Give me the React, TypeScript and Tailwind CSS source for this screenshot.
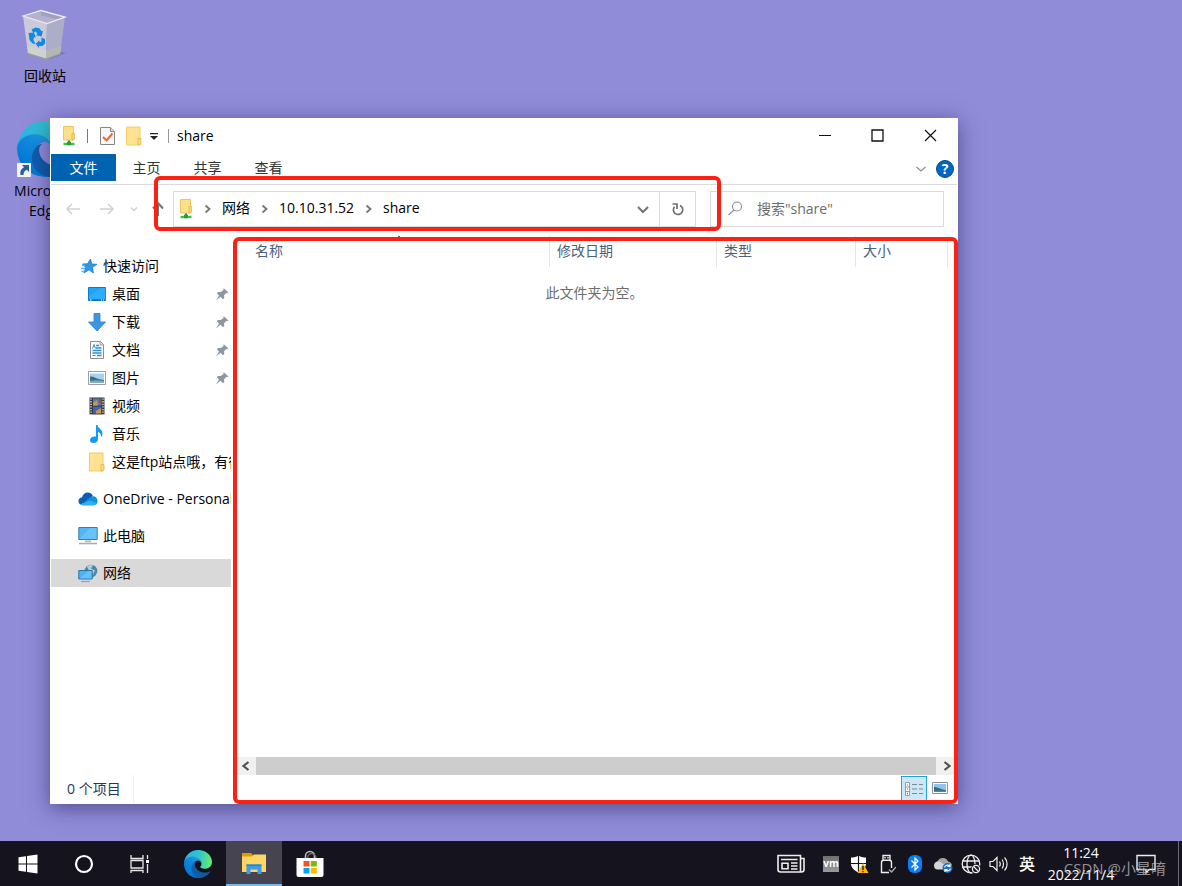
import React from 'react';

type IconProps = { className?: string };

const EdgeLogo: React.FC<IconProps> = ({ className }) => (
    <svg viewBox="0 0 256 256" className={className}>
        <defs>
            <linearGradient id="edge-deep" x1="63" y1="177" x2="241" y2="177" gradientUnits="userSpaceOnUse">
                <stop offset="0" stopColor="#0f5fae" />
                <stop offset="1" stopColor="#15539b" />
            </linearGradient>
            <linearGradient id="edge-mid" x1="153" y1="95" x2="46" y2="215" gradientUnits="userSpaceOnUse">
                <stop offset="0" stopColor="#1b9de2" />
                <stop offset="0.4" stopColor="#1388dc" />
                <stop offset="1" stopColor="#0078d4" />
            </linearGradient>
            <linearGradient id="edge-top" x1="10" y1="70" x2="250" y2="100" gradientUnits="userSpaceOnUse">
                <stop offset="0" stopColor="#2fb0e8" />
                <stop offset="0.5" stopColor="#30c4cb" />
                <stop offset="1" stopColor="#66eb6e" />
            </linearGradient>
        </defs>
        <path fill="url(#edge-deep)" d="M235.7 195.5a94 94 0 0 1-10.5 4.7 102 102 0 0 1-35.9 6.5c-47.3 0-88.5-32.6-88.5-74.4a31.5 31.5 0 0 1 16.4-27.5c-42.8 1.8-53.8 46.4-53.8 72.5 0 73.9 68.1 79 82.8 79 7.9 0 19.8-2.3 27-4.6l1.3-.4a128 128 0 0 0 66.6-50.4 4 4 0 0 0-5.4-5.4z" />
        <path fill="url(#edge-mid)" d="M105.7 241.4A79 79 0 0 1 83 220a81 81 0 0 1 29.5-120.4c3.1-1.5 8.5-4.1 15.5-4a32 32 0 0 1 25.7 13 32 32 0 0 1 6.4 18.6c0-.2 24.5-79.6-80-79.6-43.9 0-80 41.7-80 78.2a130 130 0 0 0 12.1 56 128 128 0 0 0 156.4 67.1 75.6 75.6 0 0 1-62.9-7.5z" />
        <path fill="url(#edge-top)" d="M152.3 148.9c-.8 1-3.3 2.5-3.3 5.6 0 2.6 1.7 5.1 4.7 7.2 14.4 10 41.5 8.7 41.6 8.7a59.6 59.6 0 0 0 30.3-8.3 61.4 61.4 0 0 0 30.4-52.9c.3-22.4-8-37.3-11.3-43.9C223.5 23.8 177.7 0 128 0A128 128 0 0 0 0 126.2c.5-36.5 36.8-66 80-66 3.500 0 23.500.3 42 10 16.300 8.600 24.900 19 30.900 29.200 6.200 10.700 7.300 24.200 7.300 29.500s-2.800 13.400-7.900 20z" />
    </svg>
);

const RecycleBin = () => (
    <svg viewBox="0 0 48 56" className="h-14 w-12">
        <path d="M22 51l18-5 5 1-16 6z" fill="#6a66a6" opacity="0.6" />
        <path d="M2 10L20 4.500l24 6.500-18 6.500z" fill="#b3b1cd" />
        <path d="M20 4.500l24 6.500-6 2.500-18-4z" fill="#a09fc0" />
        <path d="M2 10l24 7.500L25 53 7 47.500z" fill="#cbcadb" />
        <path d="M44 11l-18 6.500L25 53l14-5z" fill="#acadc6" />
        <path d="M6.500 40l19 4.500L25 53 7 47.500z" fill="#d0d2d0" />
        <path d="M25.500 44.500l15-4.500-1.500 8-14 5z" fill="#b4b6b6" />
        <path d="M2 10L20 4.500l24 6.500-18 6.500z" fill="none" stroke="#ecebf5" strokeWidth="1.300" />
        <path d="M7 47.500L25 53l14-5" fill="none" stroke="#9c9b90" strokeWidth="1.200" />
        <g fill="#128ae0">
            <path d="M10.500 23.500l4-2 4 .8 2 3 1.500-.3-1.500 5.500-5.500-1.300 1.500-1.200-1.800-2.500-2.400 1.500z" />
            <path d="M7.500 27l5.500-.5 1.800 5-1.800-.3-.6 2.800 2.100 4-3-.5-3-3.500-.5-4z" />
            <path d="M20.500 31.500l3.500 1.500v4.500l-2.500 2.500h-3.500l-.2 2-3-4.200 3.600-3.600.1 1.800 1.900-.2z" />
        </g>
    </svg>
);

const NetworkFolder = () => (
    <svg viewBox="0 0 14 20" className="h-5 w-3.5">
        <path d="M1.500.5h10V14h-10z" fill="#ffe08a" stroke="#ecc65b" />
        <path d="M10 7.500h2.500V13l-1 1H10z" fill="#f8d673" stroke="#dcb245" strokeWidth=".7" />
        <path d="M7 14.500v3" stroke="#21903a" strokeWidth="2.200" />
        <path d="M1.500 18h11" stroke="#35c24a" strokeWidth="2.400" />
        <path d="M5 17.500h4" stroke="#22a03a" strokeWidth="3.400" />
    </svg>
);

const Folder = () => (
    <svg viewBox="0 0 20 20" className="h-5 w-5">
        <path d="M2.500 1h13.500v18h-13.500z" fill="#ffe392" stroke="#f0cc66" />
        <path d="M14 12.500h3V18l-1 1H14z" fill="#ffdb7a" stroke="#e2b748" strokeWidth=".8" />
    </svg>
);

const CheckedPage = () => (
    <svg viewBox="0 0 20 20" className="h-5 w-5">
        <path d="M2.500 1.500h10l4 4V18.500h-14z" fill="#f7f7f7" stroke="#858585" />
        <path d="M12.500 1.500v4h4" fill="#ddd" stroke="#858585" />
        <path d="M5 11l3.500 3.500 6-7" fill="none" stroke="#ee6a35" strokeWidth="2" />
    </svg>
);

const QuickStar = () => (
    <svg viewBox="0 0 20 20" className="h-5 w-5">
        <path d="M12.500 3l1.200 5 5.300.3-4.500 3 .8 5.700-4.300-3.200-5 3.200 1.700-5.500L4.500 8l5-.2z" fill="#2d97e8" stroke="#1c7cc9" strokeWidth=".8" />
        <path d="M4 9.500h3M3 12.500h4M3.500 15.500h3" stroke="#5db5ee" strokeWidth="1.400" />
    </svg>
);

const DesktopIcon = () => (
    <svg viewBox="0 0 20 20" className="h-5 w-5">
        <path d="M1.500 3.500h17v13h-17z" fill="#1fa4fb" stroke="#0e7acb" />
        <path d="M2 12L14 4h4.500v12H2z" fill="#3fb3ff" opacity=".5" />
        <path d="M2 16h16" stroke="#0a5ea6" />
        <path d="M3 16h1.500M14 16h1M16 16h1" stroke="#fff" />
    </svg>
);

const DownloadIcon = () => (
    <svg viewBox="0 0 20 20" className="h-5 w-5">
        <path d="M7 1.500h6v8.500h5.500L10 19 1.500 10H7z" fill="#3b97e4" stroke="#2b7fca" strokeWidth=".8" />
    </svg>
);

const DocumentIcon = () => (
    <svg viewBox="0 0 20 20" className="h-5 w-5">
        <path d="M3.500 1.500h10l3 3v14h-13z" fill="#fafafa" stroke="#8b8f93" />
        <path d="M13 1.500v3.500h3.500" fill="#ddd" stroke="#8b8f93" strokeWidth=".8" />
        <path d="M9 5.500h3M9 8h5.500M5.500 10.500h9M5.500 13h9M10 15.500h4.500" stroke="#2f8fd6" strokeWidth="1.300" />
        <path d="M5.500 8.500l1.500-4 1.500 4M5.500 15.500h3" stroke="#3c8fc0" fill="none" />
    </svg>
);

const PictureIcon = () => (
    <svg viewBox="0 0 20 20" className="h-5 w-5">
        <path d="M1.500 3.500h17v13h-17z" fill="#fff" stroke="#9a9fa3" />
        <path d="M3 5.500h14v9H3z" fill="#a3d3f8" />
        <path d="M3 8.500c3-.5 5 1 7 2 2 .8 4 1 7 1.500v2.500H3z" fill="#3b6f77" />
        <path d="M3 13c5-1 9-.8 14 0v1.500H3z" fill="#7aabc8" />
    </svg>
);

const VideoIcon = () => (
    <svg viewBox="0 0 20 20" className="h-5 w-5">
        <path d="M2.500 1.500h15v17h-15z" fill="#35383c" />
        <path d="M6 2.500h8.500v7H6z" fill="#5876c9" />
        <path d="M6 10.500h8.500v7H6z" fill="#3f62b8" />
        <path d="M6 7l4-3 1 5.500H6zM9 15l5-3v5.500H9z" fill="#c59b3c" />
        <path d="M12 3h2v4h-2z" fill="#a24b44" />
        <path d="M4 2.500v16M16 2.500v16" stroke="#e8e8e8" strokeWidth="1.300" strokeDasharray="1.300 1.300" />
    </svg>
);

const MusicIcon = () => (
    <svg viewBox="0 0 20 20" className="h-5 w-5">
        <path d="M9 1h1.500c.5 3.500 5 4 5 8.500 0 2-1 3-1.500 4 .5-4-1.500-5-3-5.500V15c0 2.500-2 4-4.500 4S3 17.700 3 16s2-3.500 4.500-3.500c.6 0 1 0 1.500.3z" fill="#109bf5" />
    </svg>
);

const OneDriveIcon = () => (
    <svg viewBox="0 0 20 20" className="h-5 w-5">
        <path d="M.500 12c0-2 1.500-3.500 3.500-3.700C5 5.500 7 3.500 9.800 3.500c2.200 0 4 1.200 5 3.200L10 12l-7.500 3.500C1.200 15 .500 13.500.500 12z" fill="#0a5fb4" />
        <path d="M2.500 15.500c1-.1 2.500-1 3.500-1.900l6.200-5.400c3.500-2.200 7.300.3 7.300 3.900 0 2.300-1.500 4.100-3.500 4.100H4.500z" fill="#1490df" />
        <path d="M2.500 15.500l9.500-4 7 2.800c-.7 1.200-1.800 1.900-3 1.900H4.500z" fill="#2fb0f0" />
    </svg>
);

const ComputerIcon = () => (
    <svg viewBox="0 0 20 20" className="h-5 w-5">
        <path d="M.800 1.500h18.400v12H.800z" fill="#4fb7f7" stroke="#3b7ca8" />
        <path d="M1.500 13L12 2h6.500v11z" fill="#83d0ff" opacity=".5" />
        <path d="M7 14.500h6v1.500H7z" fill="#a8b9c6" />
        <path d="M1 17.500h18" stroke="#9db0bf" strokeWidth="1.600" />
    </svg>
);

const NetworkIcon = () => (
    <svg viewBox="0 0 20 20" className="h-5 w-5">
        <circle cx="13" cy="8" r="6.300" fill="#4f87a3" />
        <path d="M9 4c2-2.500 5-2 6-1.500l-2 3 4 2-2 4-4-4z" fill="#a7d1df" />
        <path d="M.800 7.500h13.400v8.500H.800z" fill="#45b4f6" stroke="#31749f" />
        <path d="M1.500 15.500L10 8h3.500v7.500z" fill="#83d0ff" opacity=".5" />
        <path d="M3 18.500h9" stroke="#8fa8b8" strokeWidth="1.300" />
    </svg>
);

const PinIcon = () => (
    <svg viewBox="0 0 14 14" className="mr-0.5 h-3.5 w-3.5 shrink-0">
        <path d="M8.500 1l5 4.500-1.500.8-.8-.3-2.200 2.500.3 2.500-1.300 1.200-2.500-2.500L1 13.500l3-5L1.800 6.300l1.200-1.400 2.700.2L8.500 3z" fill="#8b98a3" />
    </svg>
);

const ChevronRight = () => (
    <svg viewBox="0 0 29 12" className="h-3 w-[29px] shrink-0" fill="none" stroke="#757575" strokeWidth="1.800">
        <path d="M12.500 2.500l4 3.500-4 3.500" />
    </svg>
);

const quickLinks = [
    { icon: DesktopIcon, label: '桌面', pinned: true },
    { icon: DownloadIcon, label: '下载', pinned: true },
    { icon: DocumentIcon, label: '文档', pinned: true },
    { icon: PictureIcon, label: '图片', pinned: true },
    { icon: VideoIcon, label: '视频', pinned: false },
    { icon: MusicIcon, label: '音乐', pinned: false },
    { icon: Folder, label: '这是ftp站点哦，有很多', pinned: false },
];

const roots = [
    { icon: OneDriveIcon, label: 'OneDrive - Personal', active: false },
    { icon: ComputerIcon, label: '此电脑', active: false },
    { icon: NetworkIcon, label: '网络', active: true },
];

const TitleBar = () => (
    <header className="flex h-[35px] items-center pb-0.5 pl-2">
        <button aria-label="系统菜单" className="flex w-5 justify-center"><NetworkFolder /></button>
        <span className="ml-2 h-3.5 w-px bg-[#777]" />
        <button aria-label="属性" className="ml-2.5"><CheckedPage /></button>
        <button aria-label="新建文件夹" className="ml-1.5"><Folder /></button>
        <button aria-label="自定义快速访问工具栏" className="ml-1">
            <svg viewBox="0 0 12 12" className="h-3 w-3" fill="#222">
                <path d="M2 3h8v1.300H2zM2 6h8L6 10z" />
            </svg>
        </button>
        <span className="ml-2 h-3.5 w-px bg-[#999]" />
        <h1 className="ml-2 flex-1">share</h1>
        <button aria-label="最小化" className="flex h-full w-[53px] items-center justify-center">
            <svg viewBox="0 0 13 13" className="h-[13px] w-[13px]"><path d="M1 6.500h12" stroke="#111" /></svg>
        </button>
        <button aria-label="最大化" className="flex h-full w-[53px] items-center justify-center">
            <svg viewBox="0 0 13 13" className="h-[13px] w-[13px]"><path d="M1 1h11v11H1z" fill="none" stroke="#111" strokeWidth="1.300" /></svg>
        </button>
        <button aria-label="关闭" className="flex h-full w-[53px] items-center justify-center">
            <svg viewBox="0 0 13 13" className="h-[13px] w-[13px]"><path d="M1 1l11 11M12 1L1 12" stroke="#111" strokeWidth="1.200" /></svg>
        </button>
    </header>
);

const RibbonTabs = () => (
    <div className="flex h-[31px] border-b border-[#dadbdc] text-[#333]">
        <button className="h-[27px] w-[65px] bg-[#0063b1] text-white">文件</button>
        <button className="h-[27px] w-[61px]">主页</button>
        <button className="h-[27px] w-[61px]">共享</button>
        <button className="h-[27px] w-[61px]">查看</button>
        <div className="ml-auto flex items-center gap-2 pr-[3px]">
            <button aria-label="展开功能区">
                <svg viewBox="0 0 14 14" className="h-3.5 w-3.5" fill="none" stroke="#8f8f8f" strokeWidth="1.300"><path d="M2.500 5L7 9l4.500-4" /></svg>
            </button>
            <button aria-label="帮助" className="h-[18px] w-[18px] rounded-full border border-[#0a4d86] bg-[#0067c0] text-sm leading-4 font-bold text-white">?</button>
        </div>
    </div>
);

const AddressRow = () => (
    <div className="flex h-[51px] items-start pt-1.5 pr-[13px] pl-[5px]">
        <div className="flex h-9 items-center">
            <button aria-label="后退" className="flex w-[34px] justify-center">
                <svg viewBox="0 0 16 14" className="h-3.5 w-4" fill="none" stroke="#d2d2d2" strokeWidth="1.600"><path d="M15 7H2M7 2L2 7l5 5" /></svg>
            </button>
            <button aria-label="前进" className="flex w-[34px] justify-center">
                <svg viewBox="0 0 16 14" className="h-3.5 w-4" fill="none" stroke="#d2d2d2" strokeWidth="1.600"><path d="M1 7h13M9 2l5 5-5 5" /></svg>
            </button>
            <button aria-label="最近浏览的位置" className="flex w-5 justify-center">
                <svg viewBox="0 0 10 10" className="h-2.5 w-2.5" fill="none" stroke="#cfcfcf" strokeWidth="1.400"><path d="M2 3.500l3 3 3-3" /></svg>
            </button>
            <button aria-label="上移" className="mr-px flex w-7 justify-center">
                <svg viewBox="0 0 14 16" className="h-4 w-3.5" fill="none" stroke="#757575" strokeWidth="2"><path d="M7 15V2.500M2 7.500l5-5.500 5 5.500" /></svg>
            </button>
        </div>
        <nav aria-label="地址" className="flex h-9 flex-1 items-center border border-[#d9d9d9] pl-[5px]">
            <NetworkFolder />
            <ChevronRight />
            <button className="pb-0.5">网络</button>
            <ChevronRight />
            <button className="pb-0.5">10.10.31.52</button>
            <ChevronRight />
            <button className="pb-0.5">share</button>
            <button aria-label="以前的位置" className="ml-auto flex w-8 justify-center">
                <svg viewBox="0 0 14 14" className="h-3.5 w-3.5" fill="none" stroke="#777" strokeWidth="2.200"><path d="M2 5l5 5 5-5" /></svg>
            </button>
            <button aria-label="刷新" className="flex h-full w-9 items-center justify-center border-l border-[#d9d9d9]">
                <svg viewBox="0 0 14 14" className="h-3.5 w-3.5" fill="none" stroke="#6f6f6f" strokeWidth="1.700">
                    <path d="M9 3.500a4.700 4.700 0 1 1-5.500 1.200" />
                    <path d="M1.500 2H6v5" />
                </svg>
            </button>
        </nav>
        <label className="ml-3.5 flex h-9 w-[234px] items-center border border-[#d9d9d9] pl-4">
            <svg viewBox="0 0 16 16" className="h-4 w-4 shrink-0" fill="none" stroke="#8a8a8a" strokeWidth="1.100">
                <circle cx="10" cy="5.500" r="4.500" />
                <path d="M7 9L1.500 14" />
            </svg>
            <input type="text" aria-label="搜索" placeholder={'搜索"share"'} className="ml-3.5 w-full min-w-0 outline-none placeholder:text-[#6d6d6d]" />
        </label>
    </div>
);

const Sidebar = () => (
    <nav aria-label="导航窗格" className="mr-px flex w-[180px] shrink-0 flex-col overflow-hidden pt-4 whitespace-nowrap">
        <a href="#quick" className="flex h-7 shrink-0 items-center gap-[5px] pl-[27px]">
            <QuickStar />快速访问
        </a>
        {quickLinks.map((link) => (
            <a key={link.label} href="#folder" className="flex h-7 shrink-0 items-center gap-[5px] pl-9">
                <span className="shrink-0"><link.icon /></span>
                <span className="flex-1">{link.label}</span>
                {link.pinned && <PinIcon />}
            </a>
        ))}
        {roots.map((root) => (
            <a key={root.label} href="#root" className={`mt-[9px] flex h-7 shrink-0 items-center gap-[5px] pl-[27px] ${root.active ? 'bg-[#d9d9d9]' : ''}`}>
                <span className="shrink-0"><root.icon /></span>
                {root.label}
            </a>
        ))}
    </nav>
);

const FileList = () => (
    <main className="flex min-w-0 flex-1 flex-col">
        <div className="relative pr-[9px]">
            <table className="w-full table-fixed border-collapse text-left text-[#4c607a]">
                <thead>
                    <tr className="h-[31px]">
                        <th className="border-r border-[#e5e5e5] pb-0.5 pl-[23px] font-normal">名称</th>
                        <th className="w-[167px] border-r border-[#e5e5e5] pb-0.5 pl-[7px] font-normal">修改日期</th>
                        <th className="w-[139px] border-r border-[#e5e5e5] pb-0.5 pl-[7px] font-normal">类型</th>
                        <th className="w-[92px] border-r border-[#e5e5e5] pb-0.5 pl-[7px] font-normal">大小</th>
                    </tr>
                </thead>
            </table>
            <svg viewBox="0 0 10 6" className="absolute -top-px left-[162px] h-1.5 w-2.5" fill="none" stroke="#666"><path d="M1 5l4-4 4 4" /></svg>
        </div>
        <p className="mt-4 text-center text-[#6d6d6d]">此文件夹为空。</p>
        <div className="mt-auto ml-1 flex h-[18px] bg-[#f0f0f0]">
            <button aria-label="向左滚动" className="flex w-5 items-center justify-center">
                <svg viewBox="0 0 10 10" className="h-2.5 w-2.5" fill="none" stroke="#505050" strokeWidth="2.200"><path d="M7.500 1l-5 4 5 4" /></svg>
            </button>
            <div className="flex-1 bg-[#cdcdcd]" />
            <button aria-label="向右滚动" className="flex w-[21px] items-center justify-center">
                <svg viewBox="0 0 10 10" className="h-2.5 w-2.5" fill="none" stroke="#505050" strokeWidth="2.200"><path d="M2.500 1l5 4-5 4" /></svg>
            </button>
        </div>
    </main>
);

const StatusBar = () => (
    <footer className="flex h-7 items-start pr-1 pl-4 text-[#1e395b]">
        <span className="border-r border-[#f0f0f0] pr-3 leading-7">0 个项目</span>
        <button aria-label="详细信息" className="mt-px ml-auto flex h-[26px] w-[26px] items-center justify-center border border-[#26a0da] bg-[#cce8f6]">
            <svg viewBox="0 0 20 18" className="h-[18px] w-5 shrink-0" fill="none">
                <path d="M1.500 2.500h4v13h-4zM1.500 7h4M1.500 11.500h4" stroke="#9a9a9a" fill="#fff" />
                <path d="M3 5h1M3 9h1" stroke="#3c7bc8" />
                <path d="M3 13.500h1" stroke="#e04040" strokeWidth="1.500" />
                <path d="M8 4.500h5M15 4.500h4M8 9h5M15 9h4M8 13.500h5M15 13.500h4" stroke="#7b8a92" />
            </svg>
        </button>
        <button aria-label="大图标" className="flex h-[26px] w-[26px] items-center justify-center">
            <svg viewBox="0 0 16 12" className="h-3 w-4">
                <path d="M.500.500h15v11H.500z" fill="#fff" stroke="#8f8f8f" />
                <path d="M2 2h12v8H2z" fill="#8fc3f3" />
                <path d="M2 5c4 0 6 2.500 12 3v2H2z" fill="#2f6f6c" />
                <path d="M2 8.500h12V10H2z" fill="#4a83c4" />
            </svg>
        </button>
    </footer>
);

const ExplorerWindow = () => (
    <section aria-label="share" className="absolute top-[118px] right-[224px] bottom-[37px] left-[50px] flex flex-col border border-white bg-white text-black shadow-[0_4px_20px_rgba(20,15,70,0.5)]">
        <TitleBar />
        <RibbonTabs />
        <AddressRow />
        <div className="flex min-h-0 flex-1">
            <Sidebar />
            <FileList />
        </div>
        <StatusBar />
        {/* callouts around the address and the file area */}
        <div className="pointer-events-none absolute top-[57px] right-[236px] left-[103px] h-[55px] rounded-md border-4 border-[#ff2014]" />
        <div className="pointer-events-none absolute top-[118px] -right-px -bottom-px left-[182px] rounded-md border-4 border-[#ff2014]" />
    </section>
);

const Taskbar = () => (
    <footer className="flex h-[45px] shrink-0 bg-[#15131e] text-white">
        <div className="flex">
            <button aria-label="开始" className="flex w-14 items-center justify-center">
                <svg viewBox="0 0 20 20" className="h-5 w-5" fill="#fff">
                    <path d="M.500 3.300L8 2.200v7.300H.500zM9 2l10.500-1.500v9H9zM.500 10.500H8v7.300L.500 16.700zM9 10.500h10.500v9L9 18z" />
                </svg>
            </button>
            <button aria-label="Cortana" className="flex w-14 items-center justify-center">
                <svg viewBox="0 0 20 20" className="h-5 w-5"><circle cx="10" cy="10" r="8" fill="none" stroke="#fff" strokeWidth="2.200" /></svg>
            </button>
            <button aria-label="任务视图" className="flex w-14 items-center justify-center">
                <svg viewBox="0 0 20 18" className="h-[18px] w-5" fill="none" stroke="#e8e8e8" strokeWidth="1.300">
                    <path d="M1 0v3.500h12V0M1 5.500h12v7.500H1zM1 18v-2.500h12V18M17.500 0v4M17.500 9v9" />
                    <path d="M16 5h3v3h-3z" fill="#fff" stroke="none" />
                </svg>
            </button>
        </div>
        <div className="ml-0.5 flex">
            <button aria-label="Microsoft Edge" className="flex w-14 items-center justify-center"><EdgeLogo className="h-7 w-7" /></button>
            <button aria-label="文件资源管理器" className="flex w-14 items-center justify-center border-b-2 border-[#76b9ed] bg-[#454450]">
                <svg viewBox="0 0 26 22" className="h-[22px] w-[26px]">
                    <path d="M1 1h9l2 2v4H1z" fill="#dd9d0b" />
                    <path d="M1 4.500h10l2-2h12V20H1z" fill="#ffd563" />
                    <path d="M5.500 12.500h15V22h-4v-4.500h-7V22h-4z" fill="#3f9be8" />
                    <path d="M5.500 12.500h15v1.500h-15z" fill="#2b7fd0" />
                </svg>
            </button>
            <button aria-label="Microsoft Store" className="flex w-14 items-center justify-center">
                <svg viewBox="0 0 28 28" className="h-7 w-7">
                    <path d="M9.500 8V6a4.500 4.500 0 0 1 9 0v2" fill="none" stroke="#b9b9b9" strokeWidth="1.600" />
                    <path d="M12 8V5.500a4.500 4.500 0 0 1 8 2V8" fill="none" stroke="#6f6f76" strokeWidth="1.200" />
                    <path d="M.500 8h27v17a2 2 0 0 1-2 2h-23a2 2 0 0 1-2-2z" fill="#fff" />
                    <path d="M7.500 11h6v5.500h-6z" fill="#f25022" />
                    <path d="M14.800 11h6v5.500h-6z" fill="#7fba00" />
                    <path d="M7.500 18h6v5.500h-6z" fill="#00a4ef" />
                    <path d="M14.800 18h6v5.500h-6z" fill="#ffb900" />
                </svg>
            </button>
        </div>
        <div className="relative ml-auto flex">
            <button aria-label="资讯和兴趣" className="flex w-[52px] items-center justify-center">
                <svg viewBox="0 0 28 20" className="h-5 w-7" fill="none" stroke="#eee" strokeWidth="1.600">
                    <path d="M1 1.500h22.500v16.500H3.500a2.500 2.500 0 0 1-2.500-2.500zM23.500 4.500H27v11a2.500 2.500 0 0 1-2.500 2.500h-3" />
                    <path d="M4 5.500h16.500M14 9h6.500M14 12h6.500M14 15h6.500M5 9.200h6v5.600H5z" />
                </svg>
            </button>
            <button aria-label="VMware Tools" className="flex w-7 items-center justify-center">
                <span className="h-4 w-4 bg-linear-to-b from-[#6f6f6f] to-[#9a9a9a] text-center text-[10px] leading-[14px] font-bold text-white">vm</span>
            </button>
            <button aria-label="Windows 安全中心" className="flex w-7 items-center justify-center">
                <svg viewBox="0 0 20 20" className="h-5 w-5">
                    <path d="M9.500 1.500c2 1.500 4.500 2 7.500 2v6c0 4-3 7-7.500 9-4.500-2-7.500-5-7.500-9v-6c3 0 5.500-.5 7.500-2z" fill="#fff" />
                    <path d="M9.500 1v18M2 9.500h15" stroke="#15131e" strokeWidth="1.200" />
                    <path d="M14 9l5.500 10h-11z" fill="#fcb316" />
                    <path d="M14 12v4M14 17v1.300" stroke="#3a2a00" strokeWidth="1.500" />
                </svg>
            </button>
            <button aria-label="安全删除硬件" className="flex w-7 items-center justify-center">
                <svg viewBox="0 0 18 20" className="h-5 w-[18px]" fill="none" stroke="#eee" strokeWidth="1.400">
                    <path d="M5 6V1.500h7V6M11 18.500H3.500V8.500c0-1.500 1-2.300 2-2.300h6c1 0 2 .8 2 2.300v5.500" />
                    <path d="M7 3v1.500M10 3v1.500" />
                    <path d="M11 15.500l2.500 2.500 4.500-5" stroke="#aaa" />
                </svg>
            </button>
            <button aria-label="蓝牙" className="flex w-7 items-center justify-center">
                <svg viewBox="0 0 14 20" className="h-5 w-3.5">
                    <rect x="0" y="1" width="14" height="18" rx="6" fill="#0a7df0" />
                    <path d="M3.500 6.500l6.500 6.500-3 3V4l3 3-6.500 6.500" fill="none" stroke="#fff" strokeWidth="1.200" />
                </svg>
            </button>
            <button aria-label="OneDrive" className="flex w-7 items-center justify-center">
                <svg viewBox="0 0 20 20" className="h-5 w-5">
                    <path d="M4.500 15a4 4 0 0 1 0-7.500C5.500 5 7.500 4 10 4c2.500 0 4.300 1.500 5 3.500 2.500.5 4 2 4 4.500H13l-2 3z" fill="#a5a5a5" />
                    <path d="M1 11.500c0-2 1.500-4 4-4 1.500 0 3 .5 4 2l4 1-2 5H4.500C2.500 15.500 1 14 1 11.500z" fill="#d5d5d5" />
                    <circle cx="14.500" cy="14" r="5" fill="#1c6fc2" />
                    <path d="M11.500 13.300a3 3 0 0 1 5-1.300M17.500 14.700a3 3 0 0 1-5 1.300M17 10v2.500h-2.500M12 18v-2.500h2.500" fill="none" stroke="#fff" strokeWidth="1.200" />
                </svg>
            </button>
            <button aria-label="网络" className="flex w-7 items-center justify-center">
                <svg viewBox="0 0 20 20" className="h-5 w-5" fill="none" stroke="#eee" strokeWidth="1.300">
                    <circle cx="10" cy="10" r="8.800" />
                    <ellipse cx="10" cy="10" rx="4" ry="8.800" />
                    <path d="M1.500 7h17M1.500 13h17" />
                    <circle cx="15" cy="15" r="5" fill="#15131e" stroke="none" />
                    <circle cx="15" cy="15" r="3.600" />
                    <path d="M12.500 12.500l5 5" />
                </svg>
            </button>
            <button aria-label="音量" className="flex w-7 items-center justify-center">
                <svg viewBox="0 0 20 18" className="h-[18px] w-5" fill="none" stroke="#eee" strokeWidth="1.200">
                    <path d="M1 6.500h3L8 2.500v13l-4-4H1z" />
                    <path d="M10.500 6.500c1 1.500 1 3.500 0 5M13 4.500c2 2.500 2 6.500 0 9M15.500 2.500c3.500 3.500 3.500 9.500 0 13" />
                </svg>
            </button>
            <button className="w-7 text-base font-medium">英</button>
            <button className="w-20 text-sm leading-[22px]">
                <time className="block">11:24</time>
                <time className="block">2022/11/4</time>
            </button>
            <button aria-label="通知" className="flex w-[50px] items-center justify-center">
                <svg viewBox="0 0 20 20" className="h-5 w-5" fill="none" stroke="#eee" strokeWidth="1.400">
                    <path d="M1 1.500h18v14h-6l-3 3.500v-3.500H1z" />
                </svg>
            </button>
            <button aria-label="显示桌面" className="ml-[7px] w-1 border-l border-[#6b6a74]" />
            <span className="pointer-events-none absolute right-4 bottom-2 text-[15px] leading-5 text-[#b4b4b8]/80">CSDN @小星唷</span>
        </div>
    </footer>
);

const App: React.FC = () => {
    return (
        <div className="flex min-h-screen flex-col bg-[#908cd8] font-['Open_Sans','Noto_Sans_CJK_SC',sans-serif] text-sm leading-5 text-black">
            <div className="relative flex-1 overflow-hidden">
                <div className="flex w-[90px] flex-col gap-[35px] pt-1.5 text-center">
                    <button className="flex flex-col items-center gap-1">
                        <RecycleBin />
                        回收站
                    </button>
                    <button className="flex flex-col items-center gap-1">
                        <span className="relative">
                            <EdgeLogo className="h-14 w-14" />
                            <svg viewBox="0 0 14 14" className="absolute bottom-0 left-0 h-3.5 w-3.5">
                                <path d="M0 0h14v14H0z" fill="#f4f4f4" />
                                <path d="M5 2h7v7l-2.200-2.200C7.500 8 6.500 9.500 6.500 12H3.500c-.8-3.500.3-6 3.500-7.800z" fill="#2b5f9e" />
                            </svg>
                        </span>
                        <span>Microsoft<br />Edge</span>
                    </button>
                </div>
                <ExplorerWindow />
            </div>
            <Taskbar />
        </div>
    );
};

export default App;
